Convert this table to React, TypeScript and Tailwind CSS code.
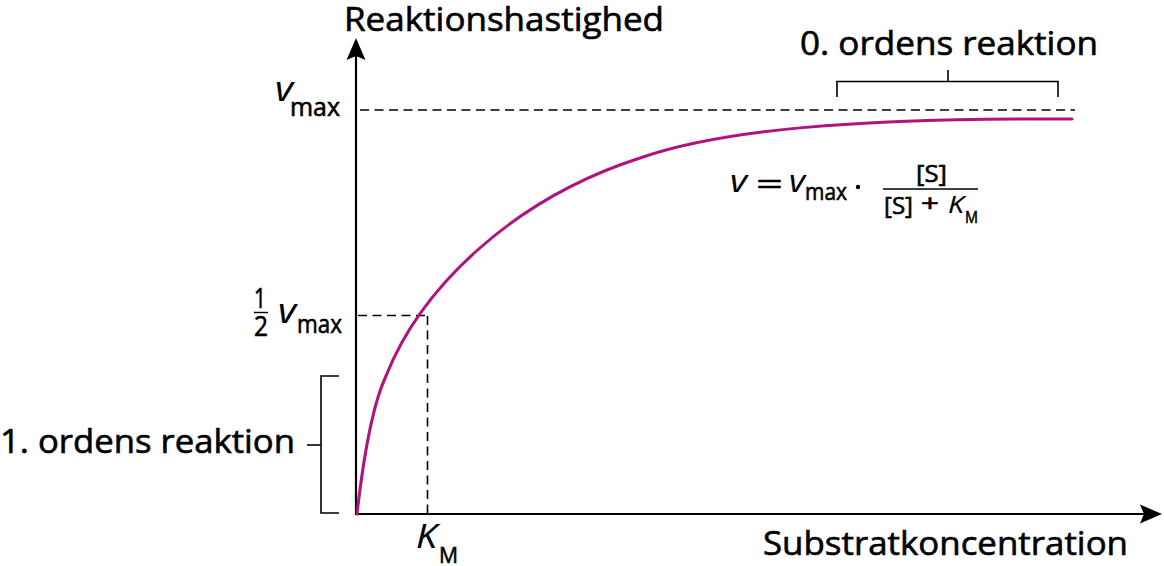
// Michaelis-Menten diagram: reaction rate vs substrate concentration
const FONT = '"Open Sans", "Noto Sans", sans-serif';
const CURVE = "#b0127f";

export default function App() {
  return (
    <div className="w-[1164px] h-[566px] bg-white overflow-hidden">
      <svg
        width="1164"
        height="566"
        viewBox="0 0 1164 566"
        fontFamily={FONT}
        fill="#000"
        className="block"
      >
        {/* axes */}
        <line x1="356" y1="515" x2="356" y2="54" stroke="#000" strokeWidth="2.2" />
        <polygon points="356,38 346.5,60 356,56 365.5,60" />
        <line x1="355" y1="514" x2="1146" y2="514" stroke="#000" strokeWidth="2.2" />
        <polygon points="1162,514 1140,504.5 1144,514 1140,523.5" />

        {/* dashed guides */}
        <g stroke="#000" strokeWidth="1.6" strokeDasharray="9 5.5" fill="none">
          <line x1="360" y1="110" x2="1075" y2="110" />
          <line x1="358" y1="315.5" x2="428" y2="315.5" />
          <line x1="427.5" y1="316" x2="427.5" y2="513" />
        </g>

        {/* curve */}
        <path
          d="M357,514 C362,470 370,410 386,376 C420,290 510,200 640,158 C720,130 850,118 1072,119"
          stroke={CURVE}
          strokeWidth="3"
          fill="none"
          strokeLinecap="round"
        />

        {/* brackets */}
        <g stroke="#000" strokeWidth="1.6" fill="none">
          <polyline points="837,97 837,81.5 1058,81.5 1058,97" />
          <line x1="948" y1="81.5" x2="948" y2="70" />
          <polyline points="339,376 321,376 321,513 339,513" />
          <line x1="307" y1="445" x2="321" y2="445" />
        </g>

        {/* labels, slightly stroked to get the heavier look of the original */}
        <g stroke="#000" strokeWidth="0.6">
          {/* axis titles */}
          <text x="344" y="31" fontSize="32" textLength="320" lengthAdjust="spacingAndGlyphs">
            Reaktionshastighed
          </text>
          <text x="763" y="555" fontSize="32" textLength="365" lengthAdjust="spacingAndGlyphs">
            Substratkoncentration
          </text>

          {/* bracket labels */}
          <text x="800" y="55" fontSize="32" textLength="298" lengthAdjust="spacingAndGlyphs">
            0. ordens reaktion
          </text>
          <text x="0" y="453" fontSize="32" textLength="295" lengthAdjust="spacingAndGlyphs">
            1. ordens reaktion
          </text>

          {/* v max */}
          <text x="275" y="101" fontSize="34" fontStyle="italic" strokeWidth="0.15" textLength="18" lengthAdjust="spacingAndGlyphs">
            v
          </text>
          <text x="290" y="116" fontSize="25" textLength="50" lengthAdjust="spacingAndGlyphs">
            max
          </text>

          {/* 1/2 v max */}
          <text x="254" y="308" fontSize="27" textLength="12" lengthAdjust="spacingAndGlyphs">
            1
          </text>
          <text x="254" y="336" fontSize="27" textLength="14" lengthAdjust="spacingAndGlyphs">
            2
          </text>
          <text x="278" y="323" fontSize="34" fontStyle="italic" strokeWidth="0.15" textLength="18" lengthAdjust="spacingAndGlyphs">
            v
          </text>
          <text x="297" y="333" fontSize="25" textLength="45" lengthAdjust="spacingAndGlyphs">
            max
          </text>

          {/* K M */}
          <text x="416" y="548" fontSize="32" fontStyle="italic" strokeWidth="0.15" textLength="21" lengthAdjust="spacingAndGlyphs">
            K
          </text>
          <text x="439" y="563" fontSize="22" textLength="19" lengthAdjust="spacingAndGlyphs">
            M
          </text>

          {/* formula */}
          <text x="730" y="192" fontSize="31" fontStyle="italic" strokeWidth="0.15" textLength="17" lengthAdjust="spacingAndGlyphs">
            v
          </text>
          <text x="756" y="195" fontSize="31" textLength="27" lengthAdjust="spacingAndGlyphs">
            =
          </text>
          <text x="789" y="192" fontSize="31" fontStyle="italic" strokeWidth="0.15" textLength="16" lengthAdjust="spacingAndGlyphs">
            v
          </text>
          <text x="805" y="200" fontSize="23" textLength="42" lengthAdjust="spacingAndGlyphs">
            max
          </text>
          <text x="916" y="182" fontSize="24" textLength="31" lengthAdjust="spacingAndGlyphs">
            [S]
          </text>
          <text x="884" y="214" fontSize="24" textLength="29" lengthAdjust="spacingAndGlyphs">
            [S]
          </text>
          <text x="921" y="212" fontSize="24" textLength="18" lengthAdjust="spacingAndGlyphs">
            +
          </text>
          <text x="948" y="213" fontSize="24" fontStyle="italic" strokeWidth="0.15" textLength="16" lengthAdjust="spacingAndGlyphs">
            K
          </text>
          <text x="965" y="223" fontSize="17" textLength="13" lengthAdjust="spacingAndGlyphs">
            M
          </text>
        </g>

        {/* fraction bars and multiplication dot */}
        <line x1="254" y1="312.5" x2="268" y2="312.5" stroke="#000" strokeWidth="1.4" />
        <circle cx="858" cy="187" r="2.2" />
        <line x1="883" y1="189" x2="978" y2="189" stroke="#000" strokeWidth="1.5" />
      </svg>
    </div>
  );
}
